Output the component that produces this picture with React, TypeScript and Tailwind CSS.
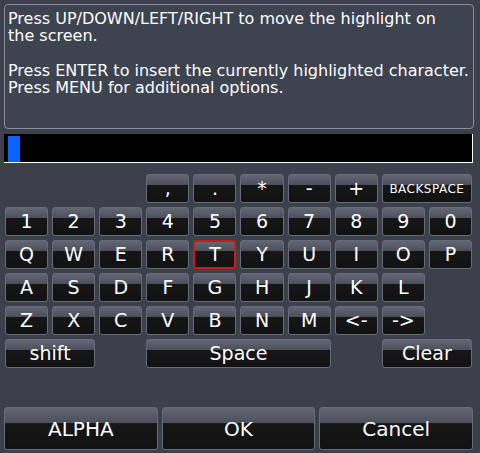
import React from "react";

type K = { label: string; col: string; small?: boolean; active?: boolean };

const FONT = { fontFamily: '"DejaVu Sans", Verdana, sans-serif' };

const letters = (s: string[], active?: string): K[] =>
  s.map((c, i) => ({ label: c, col: i === 0 ? "col-start-1" : "", active: c === active }));

const rows: K[][] = [
  [
    { label: ",", col: "col-start-4" },
    { label: ".", col: "col-start-5" },
    { label: "*", col: "col-start-6" },
    { label: "-", col: "col-start-7" },
    { label: "+", col: "col-start-8" },
    { label: "BACKSPACE", col: "col-start-9 col-span-2", small: true },
  ],
  letters("1234567890".split("")),
  letters("QWERTYUIOP".split(""), "T"),
  letters("ASDFGHJKL".split("")),
  letters(["Z", "X", "C", "V", "B", "N", "M", "<-", "->"]),
  [
    { label: "shift", col: "col-start-1 col-span-2" },
    { label: "Space", col: "col-start-4 col-span-4" },
    { label: "Clear", col: "col-start-9 col-span-2" },
  ],
];

function Key({ k, tall }: { k: K; tall?: boolean }) {
  return (
    <div
      className={`${k.col} relative flex items-center justify-center rounded-[3px] overflow-hidden ${
        tall ? "h-[43px]" : "h-[29px]"
      } ${k.active ? "border-2 border-[#d01818]" : "border border-[#666b77]"}`}
      style={{
        background: "linear-gradient(to bottom, #626773 0%, #4c505b 36%, #161616 38%, #121212 100%)",
      }}
    >
      <span
        className={`text-white leading-none ${k.small ? "text-[12px] tracking-[0.5px]" : tall ? "text-[20px]" : "text-[19px]"}`}
        style={FONT}
      >
        {k.label}
      </span>
    </div>
  );
}

export default function App() {
  return (
    <div className="w-[480px] h-[453px] bg-[#3b404b] overflow-hidden relative" style={FONT}>
      <div className="mx-[4px] mt-[4px] mr-[6px] h-[125px] rounded-[4px] border border-[#8a8f98] bg-[#3e4350] px-[3px] pt-[5px] text-[16px] leading-[17.3px] text-white whitespace-nowrap">
        <p>Press UP/DOWN/LEFT/RIGHT to move the highlight on</p>
        <p>the screen.</p>
        <p className="mt-[17px]">Press ENTER to insert the currently highlighted character.</p>
        <p>Press MENU for additional options.</p>
      </div>

      <div className="ml-[4px] mr-[7px] mt-[5px] h-[29px] bg-black border-b border-r border-white flex items-stretch">
        <div className="ml-[4px] mt-[2px] w-[12px] bg-[#0a62ff]" />
      </div>

      <div className="grid grid-cols-10 gap-x-[4px] gap-y-[4px] px-[5px] pr-[8px] mt-[11px]">
        {rows.map((r, i) => (
          <React.Fragment key={i}>
            {r.map((k, j) => (
              <Key key={i + "-" + j} k={k} />
            ))}
          </React.Fragment>
        ))}
      </div>

      <div className="grid grid-cols-3 gap-x-[4px] px-[4px] pr-[7px] mt-[39px]">
        {["ALPHA", "OK", "Cancel"].map((l) => (
          <Key key={l} k={{ label: l, col: "" }} tall />
        ))}
      </div>
    </div>
  );
}
